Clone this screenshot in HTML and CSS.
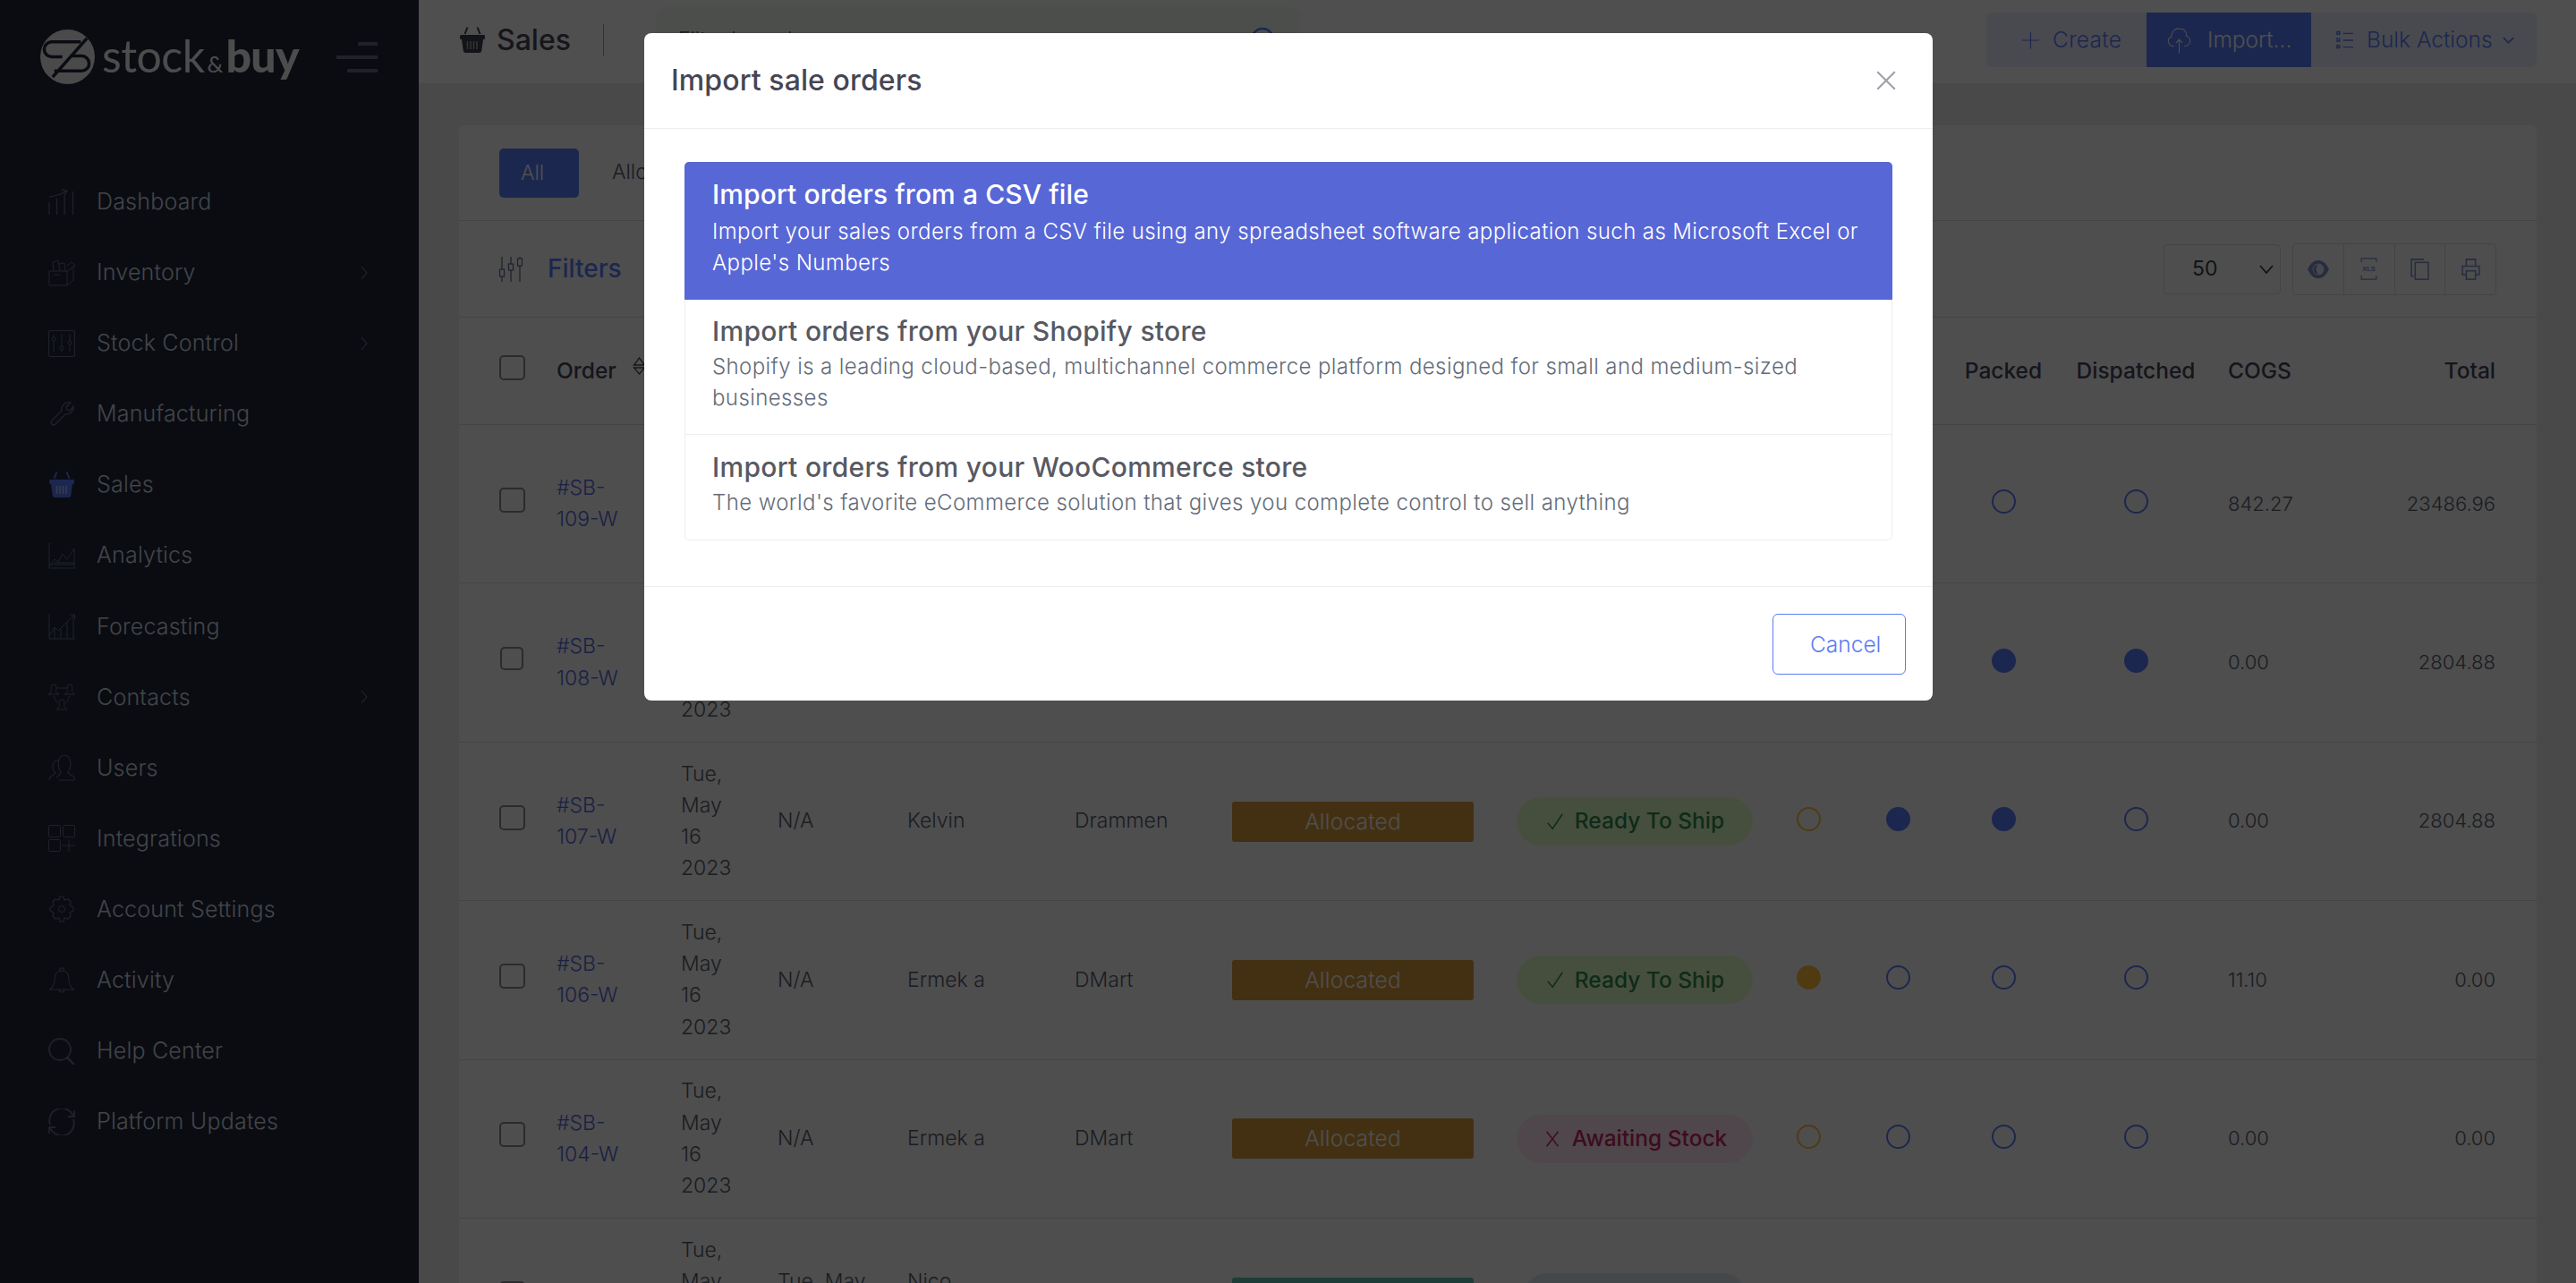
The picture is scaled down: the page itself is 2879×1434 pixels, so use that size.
FILE: index.html
```html
<!DOCTYPE html>
<html lang="en">
<head>
<meta charset="utf-8">
<title>Sales - stock&amp;buy</title>
<link rel="stylesheet" href="styles.css">
</head>
<body>
<svg class="defs" width="0" height="0" aria-hidden="true">
  <symbol id="basket" viewBox="0 0 30 30">
    <path d="M9.5 0.5 L6.5 8 M20.500 0.5 L23.500 8" fill="none" stroke="currentColor" stroke-width="2"/>
    <path d="M1 10.500 a1.500 1.500 0 0 1 1.500-1.500 h25 a1.500 1.500 0 0 1 1.500 1.500 v2 a1.500 1.500 0 0 1-1.500 1.500 h-0.500 l-1.800 13 a2.500 2.500 0 0 1-2.500 2 h-15.400 a2.500 2.500 0 0 1-2.500-2 l-1.800-13 h-0.500 a1.500 1.500 0 0 1-1.500-1.500 z" fill="currentColor"/>
    <path d="M9.500 16 v9 M13 16 v9 M16.500 16 v9 M20 16 v9" stroke="#fff" stroke-opacity=".55" stroke-width="1.500"/>
  </symbol>
  <symbol id="chev" viewBox="0 0 10 20">
    <path d="M2 3 L8 10 L2 17" fill="none" stroke="currentColor" stroke-width="1"/>
  </symbol>
  <symbol id="check" viewBox="0 0 24 24">
    <path d="M3 14 L9 21 L21 3" fill="none" stroke="currentColor" stroke-width="1.600"/>
  </symbol>
  <symbol id="cross" viewBox="0 0 24 24">
    <path d="M5 3 L19 21 M19 3 L5 21" fill="none" stroke="currentColor" stroke-width="1.600"/>
  </symbol>
</svg>

<aside class="sidebar">
  <div class="brand">
    <svg class="logo-mark" viewBox="0 0 62 64" aria-hidden="true">
      <circle cx="31" cy="32" r="31" fill="#fff" fill-opacity=".93"/>
      <path d="M46 15 H13 a8.500 8.500 0 0 0 0 17 H25 M53 11 L14 55 M16 48 H47 a8.500 8.500 0 0 0 0-17 H36" fill="none" stroke="#21283c" stroke-width="3.600"/>
    </svg>
    <span class="logo-text"><span class="logo-stock">stock</span><span class="logo-amp">&amp;</span><span class="logo-buy">buy</span></span>
    <div class="burger"><i class="b1"></i><i class="b2"></i><i class="b3"></i></div>
  </div>
  <nav class="nav">
    <a class="nav-item"><svg class="nav-ic" viewBox="0 0 30 30"><path d="M1 29 V15 M9.500 29 V11 M18 29 V7 M27.500 29 V3 M1 9 Q10 8 20 3 M15 1 L21 2.500 L18 7" fill="none" stroke="currentColor" stroke-width="1.300"/></svg><span>Dashboard</span></a>
    <a class="nav-item"><svg class="nav-ic" viewBox="0 0 30 30"><path d="M1 13 H21 V29 H1 Z M21 13 L29 7 M21 29 L28 23 V12 M6 13 L5 3 L11 1 L13 13 M12 5 L18 4 L19 13 M21 7 L26 3 L30 7 L26 12 M6 17 H13" fill="none" stroke="currentColor" stroke-width="1"/></svg><span>Inventory</span><svg class="nav-chev"><use href="#chev"/></svg></a>
    <a class="nav-item"><svg class="nav-ic" viewBox="0 0 30 30"><rect x="0.500" y="0.500" width="29" height="29" rx="2" fill="none" stroke="currentColor" stroke-width="1.200"/><path d="M6 5 V24 M15 5 V24 M24 5 V24" stroke="currentColor" stroke-width="1"/><circle cx="6" cy="10" r="2" fill="#21283c" stroke="currentColor"/><circle cx="15" cy="20" r="2" fill="#21283c" stroke="currentColor"/><circle cx="24" cy="14" r="2" fill="#21283c" stroke="currentColor"/></svg><span>Stock Control</span><svg class="nav-chev"><use href="#chev"/></svg></a>
    <a class="nav-item"><svg class="nav-ic" viewBox="0 0 30 30"><path d="M4 22 L15 11 A8 8 0 0 1 25 2 L20 7 L21 10 L24 11 L28 6 A8 8 0 0 1 19 15 L8 26 A2.800 2.800 0 0 1 4 22 Z" fill="none" stroke="currentColor" stroke-width="1.300"/></svg><span>Manufacturing</span></a>
    <a class="nav-item is-active"><svg class="nav-ic"><use href="#basket"/></svg><span>Sales</span></a>
    <a class="nav-item"><svg class="nav-ic" viewBox="0 0 30 30"><path d="M1 1 V29 H30 M1 27 L7 19 L11 22 L16 13 L21 19 L29 7 V29 M1 25 H29 M6 23 H29" fill="none" stroke="currentColor" stroke-width="1"/></svg><span>Analytics</span></a>
    <a class="nav-item"><svg class="nav-ic" viewBox="0 0 30 30"><path d="M1 1 V29 H30 M1 26 L7 16 L11 20 L29 2 M24 2 H29.500 V7 M7 16 V29 M14 18 V29 M21 10 V29 M28 4 V29" fill="none" stroke="currentColor" stroke-width="1"/></svg><span>Forecasting</span></a>
    <a class="nav-item"><svg class="nav-ic" viewBox="0 0 30 30"><path d="M6 1 a3 3 0 0 1 3 3 c0 4-1 5 0 6 l3 2 H0 l3-2 c1-1 0-2 0-6 a3 3 0 0 1 3-3 Z M24 1 a3 3 0 0 1 3 3 c0 4-1 5 0 6 l3 2 H18 l3-2 c1-1 0-2 0-6 a3 3 0 0 1 3-3 Z M15 18 a3 3 0 0 1 3 3 c0 3-1 4 0 5 l3 3 H9 l3-3 c1-1 0-2 0-5 a3 3 0 0 1 3-3 Z M9 5 H21 M6 14 L10 22 M24 14 L20 22" fill="none" stroke="currentColor" stroke-width="1"/></svg><span>Contacts</span><svg class="nav-chev"><use href="#chev"/></svg></a>
    <a class="nav-item"><svg class="nav-ic" viewBox="0 0 30 30"><path d="M1 29 c0-6 6-5 7-8 c-5-5-4-14 3-14 M12 29 H30 c0-6-7-5-8-9 c5-7 3-19-4-19 c-7 0-9 12-4 19 c-1 4-3 4-5 6" fill="none" stroke="currentColor" stroke-width="1.100"/></svg><span>Users</span></a>
    <a class="nav-item"><svg class="nav-ic" viewBox="0 0 30 30"><rect x="0.500" y="0.500" width="13" height="13" rx="1" fill="none" stroke="currentColor"/><rect x="16.500" y="0.500" width="13" height="13" rx="1" fill="none" stroke="currentColor"/><rect x="0.500" y="16.500" width="13" height="13" rx="1" fill="none" stroke="currentColor"/><path d="M23 16 V30 M16 23 H30" stroke="currentColor"/></svg><span>Integrations</span></a>
    <a class="nav-item"><svg class="nav-ic" viewBox="0 0 30 30"><circle cx="15" cy="15" r="3.500" fill="none" stroke="currentColor"/><path d="M13 1 h4 l1 4 l4-1 l3 3 l-1 4 l4 2 v4 l-4 2 l1 4 l-3 3 l-4-1 l-1 4 h-4 l-1-4 l-4 1 l-3-3 l1-4 l-4-2 v-4 l4-2 l-1-4 l3-3 l4 1 Z" fill="none" stroke="currentColor" stroke-width="1.200"/></svg><span>Account Settings</span></a>
    <a class="nav-item"><svg class="nav-ic" viewBox="0 0 30 30"><path d="M15 4 c-6 0-8 4-8 10 c0 6-2 9-6 11 H29 c-4-2-6-5-6-11 c0-6-2-10-8-10 Z M13 4 V1 H17 V4 M12 25 a3 3 0 0 0 6 0" fill="none" stroke="currentColor" stroke-width="1.100"/></svg><span>Activity</span></a>
    <a class="nav-item"><svg class="nav-ic" viewBox="0 0 30 30"><circle cx="13" cy="13" r="12" fill="none" stroke="currentColor" stroke-width="1.800"/><path d="M21 22 L29 30" stroke="currentColor" stroke-width="2.500"/></svg><span>Help Center</span></a>
    <a class="nav-item"><svg class="nav-ic" viewBox="0 0 30 30"><path d="M2 18 A13 13 0 0 1 28 9 M28 12 A13 13 0 0 1 2 21 M22 9 H29 V2 M8 21 H1 V28" fill="none" stroke="currentColor" stroke-width="1.800"/></svg><span>Platform Updates</span></a>
  </nav>
</aside>

<div class="page">
  <header class="topbar">
    <svg class="top-basket"><use href="#basket"/></svg>
    <h1 class="top-title">Sales</h1>
    <div class="top-rule"></div>
    <div class="search"><span>Filter by order</span>
      <svg class="search-ic" viewBox="0 0 30 30"><circle cx="14" cy="14" r="12" fill="none" stroke="currentColor" stroke-width="2.500"/><path d="M23 23 L29 29" stroke="currentColor" stroke-width="2.500"/></svg>
    </div>
    <div class="actions">
      <a class="act act-create"><svg class="act-ic" viewBox="0 0 20 20"><path d="M10 0 V20 M0 10 H20" stroke="currentColor" stroke-width="1.200"/></svg><span>Create</span></a>
      <a class="act act-import"><svg class="act-cloud" viewBox="0 0 28 30"><path d="M8 22 C1 22 -1 13 5 11 C5 4 11 0 15 2 C20 1 23 6 22 10 C28 11 29 21 20 22 M14 14 V30 M10.500 18 L14 14 L17.500 18" fill="none" stroke="currentColor" stroke-width="1.100"/></svg><span>Import...</span></a>
      <a class="act act-bulk"><svg class="act-ic" viewBox="0 0 20 24"><path d="M8 4 H20 M8 12 H20 M8 20 H20" stroke="currentColor" stroke-width="1.500"/><path d="M1 2 h3 v3 h-3 Z M1 10 h3 v3 h-3 Z M1 18 h3 v3 h-3 Z" fill="none" stroke="currentColor" stroke-width="1.500"/></svg><span>Bulk Actions</span><svg class="act-caret" viewBox="0 0 14 10"><path d="M1 2 L7 8 L13 2" fill="none" stroke="currentColor" stroke-width="2"/></svg></a>
    </div>
  </header>

  <main class="main">
    <section class="card">
      <div class="tabs"><a class="tab tab-on">All</a><a class="tab">Allocated</a></div>
      <div class="filters">
        <svg class="filter-ic" viewBox="0 0 26 28"><path d="M3 0 V14 M3 22 V28 M13 0 V8 M13 15 V28 M23 0 V2 M23 10 V28" stroke="currentColor" stroke-width="1.200"/><rect x="0.500" y="14" width="5" height="8" fill="none" stroke="currentColor" stroke-width="1.200"/><rect x="10.500" y="8" width="5" height="7" fill="none" stroke="currentColor" stroke-width="1.200"/><rect x="20.500" y="2" width="5" height="8" fill="none" stroke="currentColor" stroke-width="1.200"/></svg>
        <span class="filter-label">Filters</span>
        <div class="page-size"><span>50</span><svg class="size-caret" viewBox="0 0 16 12"><path d="M1 2 L8 10 L15 2" fill="none" stroke="currentColor" stroke-width="1.500"/></svg></div>
        <div class="tools">
          <div class="tool"><svg class="tool-eye" viewBox="0 0 28 24"><path d="M1 12 C5 3 10 1 14 1 C18 1 23 3 27 12 C23 21 18 23 14 23 C10 23 5 21 1 12 Z" fill="currentColor"/><circle cx="14" cy="12" r="7" fill="#fff" fill-opacity=".8"/><path d="M14 6 A6 6 0 1 0 14 18 A8 8 0 0 1 14 6 Z" fill="currentColor"/></svg></div>
          <div class="tool"><svg class="tool-xls" viewBox="0 0 22 30"><path d="M1 6 V1 H21 V6 M1 24 V29 H21 V24" fill="none" stroke="currentColor" stroke-width="1.500"/><text x="11" y="18" class="xls">XLS</text></svg></div>
          <div class="tool"><svg class="tool-doc" viewBox="0 0 24 28"><path d="M17 1 H1 V23 H4" fill="none" stroke="currentColor" stroke-width="1.800"/><rect x="6" y="5" width="17" height="22" fill="none" stroke="currentColor" stroke-width="1.800"/></svg></div>
          <div class="tool"><svg class="tool-doc" viewBox="0 0 24 28"><path d="M6 10 V1 H18 V10 M6 21 H1 V10 H23 V21 H18" fill="none" stroke="currentColor" stroke-width="1.800"/><rect x="6" y="16" width="12" height="11" fill="none" stroke="currentColor" stroke-width="1.800"/></svg></div>
        </div>
      </div>

      <div class="row row-head">
        <span class="box"></span>
        <span class="order-head">Order<svg class="sort" viewBox="0 0 14 20"><path d="M7 1 L13 9 H1 Z M1 12 H13 L7 19 Z" fill="none" stroke="currentColor" stroke-width="1.300"/></svg></span>
        <span class="col-packed c">Packed</span><span class="c">Dispatched</span>
        <span class="cogs">COGS</span><span class="r">Total</span>
      </div>

      <div class="row">
        <span class="box"></span><a class="link">#SB-<br>109-W</a>
        <span class="c col-packed"><i class="dot"></i></span><span class="c"><i class="dot"></i></span>
        <span class="cogs num">842.27</span><span class="r num">23486.96</span>
      </div>
      <div class="row">
        <span class="box box-sm"></span><a class="link">#SB-<br>108-W</a><span class="date">Tue, May 16 2023</span>
        <span class="c col-packed"><i class="dot on"></i></span><span class="c"><i class="dot on"></i></span>
        <span class="cogs num">0.00</span><span class="r num">2804.88</span>
      </div>
      <div class="row">
        <span class="box"></span><a class="link">#SB-<br>107-W</a><span class="date">Tue, May 16 2023</span><span>N/A</span><span>Kelvin</span><span>Drammen</span>
        <span class="tag tag-amber">Allocated</span><span class="pill pill-green"><svg class="pill-ic"><use href="#check"/></svg>Ready To Ship</span>
        <span class="c"><i class="dot amber"></i></span><span class="c"><i class="dot on"></i></span><span class="c"><i class="dot on"></i></span><span class="c"><i class="dot"></i></span>
        <span class="cogs num">0.00</span><span class="r num">2804.88</span>
      </div>
      <div class="row">
        <span class="box"></span><a class="link">#SB-<br>106-W</a><span class="date">Tue, May 16 2023</span><span>N/A</span><span>Ermek a</span><span>DMart</span>
        <span class="tag tag-amber">Allocated</span><span class="pill pill-green"><svg class="pill-ic"><use href="#check"/></svg>Ready To Ship</span>
        <span class="c"><i class="dot amber on"></i></span><span class="c"><i class="dot"></i></span><span class="c"><i class="dot"></i></span><span class="c"><i class="dot"></i></span>
        <span class="cogs num">11.10</span><span class="r num">0.00</span>
      </div>
      <div class="row">
        <span class="box"></span><a class="link">#SB-<br>104-W</a><span class="date">Tue, May 16 2023</span><span>N/A</span><span>Ermek a</span><span>DMart</span>
        <span class="tag tag-amber">Allocated</span><span class="pill pill-red"><svg class="pill-ic"><use href="#cross"/></svg>Awaiting Stock</span>
        <span class="c"><i class="dot amber"></i></span><span class="c"><i class="dot"></i></span><span class="c"><i class="dot"></i></span><span class="c"><i class="dot"></i></span>
        <span class="cogs num">0.00</span><span class="r num">0.00</span>
      </div>
      <div class="row">
        <span class="box"></span><a class="link"></a><span class="date">Tue, May 16 2023</span><span>Tue, May<br>16 2023</span><span>Nico<br>&nbsp;</span><span></span>
        <span class="tag tag-teal"></span><span class="pill pill-grey"></span>
      </div>
    </section>
  </main>
</div>

<div class="backdrop"></div>

<div class="modal" role="dialog" aria-label="Import sale orders">
  <div class="modal-head">
    <h2 class="modal-title">Import sale orders</h2>
    <svg class="modal-close" viewBox="0 0 22 22"><path d="M2 2 L20 20 M20 2 L2 20" fill="none" stroke="currentColor" stroke-width="2"/></svg>
  </div>
  <div class="modal-body">
    <div class="list">
      <a class="list-item list-active">
        <h3 class="li-title">Import orders from a CSV file</h3>
        <p class="li-text">Import your sales orders from a CSV file using any spreadsheet software application such as Microsoft Excel or Apple's Numbers</p>
      </a>
      <a class="list-item">
        <h3 class="li-title">Import orders from your Shopify store</h3>
        <p class="li-text">Shopify is a leading cloud-based, multichannel commerce platform designed for small and medium-sized businesses</p>
      </a>
      <a class="list-item">
        <h3 class="li-title">Import orders from your WooCommerce store</h3>
        <p class="li-text">The world's favorite eCommerce solution that gives you complete control to sell anything</p>
      </a>
    </div>
  </div>
  <div class="modal-foot"><a class="btn-cancel">Cancel</a></div>
</div>
</body>
</html>
```

FILE: styles.css
```css
* { box-sizing: border-box; }
html, body { margin: 0; height: 1434px; overflow: hidden; }
body {
  display: flex;
  position: relative;
  width: 2879px;
  font-family: Inter, "Open Sans", "Liberation Sans", sans-serif;
  font-size: 23px;
  font-weight: 300;
  line-height: 35.2px;
  color: #595d6e;
  background: #ebebeb;
}
.defs { position: absolute; }
a { color: inherit; text-decoration: none; }
h1, h2, h3, p { margin: 0; }

/* sidebar */
.sidebar { width: 468px; flex: none; height: 1434px; background: #20273a; color: #d5dce6; }
.brand { height: 186px; padding: 32px 46px 0 45px; display: flex; align-items: flex-start; }
.logo-mark { width: 61px; height: 63px; flex: none; }
.logo-text { margin-left: 8px; font-family: Lato, sans-serif; color: #fff; font-size: 50px; line-height: 60px; white-space: nowrap; opacity: .95; }
.logo-stock { font-weight: 400; letter-spacing: -.5px; }
.logo-amp { font-weight: 400; font-size: 25px; margin: 0 3px; }
.logo-buy { font-weight: 900; font-size: 50px; letter-spacing: -.6px; }
.burger { margin-left: auto; margin-top: 15px; width: 46px; flex: none; display: flex; flex-direction: column; align-items: flex-end; gap: 11.5px; }
.burger i { display: block; height: 3.500px; background: #676e85; }
.b1 { width: 22px; } .b2 { width: 46px; } .b3 { width: 34px; }

.nav-item { height: 79.100px; padding: 0 56px 0 54px; display: flex; align-items: center; font-size: 25px; letter-spacing: .2px; }
.nav-ic { width: 30px; height: 30px; flex: none; margin-right: 24px; color: #676e85; }
.nav-chev { width: 10px; height: 22px; margin-left: auto; color: #8a90a4; }
.nav-item.is-active .nav-ic { color: #5a7eff; }

/* top bar */
.page { flex: 1; min-width: 0; height: 1434px; overflow: hidden; display: flex; flex-direction: column; }
.topbar { height: 93px; flex: none; background: #fff; padding: 0 44px 4px 45px; display: flex; align-items: center; }
.top-basket { width: 30px; height: 30px; color: #3f4250; flex: none; }
.top-title { font-size: 32px; font-weight: 500; margin-left: 12px; color: #48465b; line-height: 40px; }
.top-rule { width: 1px; height: 36px; background: #a3a6b2; margin-left: 36px; }
.search { width: 720px; height: 74px; margin-left: 58px; background: #f5fbf5; border-radius: 10px; display: flex; align-items: center; justify-content: space-between; padding: 0 26px 0 25px; }
.search-ic { width: 30px; height: 30px; color: #5a7eff; }
.actions { margin-left: auto; height: 61px; display: flex; background: #ebefff; border-radius: 6px; color: #5a7eff; font-size: 24.500px; }
.act { display: flex; align-items: center; height: 61px; }
.act-create { width: 179px; padding-left: 40px; gap: 15px; letter-spacing: .3px; }
.act-import { width: 184px; padding-left: 23px; gap: 18px; background: #5a7eff; color: #fff; }
.act-bulk { width: 252px; padding-left: 28px; gap: 15px; }
.act-ic { width: 19px; height: 24px; flex: none; }
.act-cloud { width: 27px; height: 30px; flex: none; }
.act-caret { width: 13px; height: 10px; margin-left: -4px; }

/* card */
.main { flex: 1; padding: 47px 44px 0 45px; }
.card { background: #fbfbfb; border-radius: 6px 6px 0 0; }
.tabs { height: 107px; padding-left: 45px; display: flex; align-items: center; gap: 37px; border-bottom: 1px solid #d9dbe4; }
.tab-on { width: 89px; height: 55px; padding-left: 24px; line-height: 54px; border-radius: 5px; background: #5a7eff; color: #fff; }
.filters { height: 108px; padding: 0 45px; display: flex; align-items: center; border-bottom: 1px solid #d9dbe4; }
.filter-ic { width: 26px; height: 28px; color: #5d678f; margin-right: 28px; }
.filter-label { font-size: 28px; font-weight: 500; color: #5a7eff; }
.page-size { margin-left: auto; width: 131px; height: 56px; border: 1px solid #dadbe2; border-radius: 4px; display: flex; align-items: center; justify-content: space-between; padding: 0 7px 0 31px; color: #3c3f4c; font-weight: 400; }
.size-caret { width: 16px; height: 12px; color: #2c2e3a; }
.tools { margin-left: 13px; width: 228px; height: 58px; display: flex; border: 1px solid #dadbe2; border-radius: 4px; }
.tool { flex: 1; display: flex; align-items: center; justify-content: center; border-left: 1px solid #dadbe2; color: #7f8fcf; }
.tool:first-child { border-left: 0; }
.tool-eye { width: 26px; height: 22px; }
.tool-xls { width: 19px; height: 25px; }
.tool-doc { width: 23px; height: 24px; }
.xls { font-family: "Liberation Sans", sans-serif; font-size: 9px; font-weight: 700; text-anchor: middle; fill: currentColor; }

/* table */
.row {
  display: grid;
  grid-template-columns: 64px 139px 108px 145px 187px 176px 318px 286px 80px 120px 116px 180px 100px 212px;
  align-items: center;
  padding: 17.800px 46px 17.800px 45px;
  border-bottom: 1px solid #d9dbe4;
  min-height: 177.400px;
}
.row-head { min-height: 0; height: 120px; padding-top: 0; padding-bottom: 0; font-size: 24.500px; font-weight: 500; color: #48465b; }
.box { width: 29px; height: 28px; margin-top: -9px; border: 2px solid #8a8c96; border-radius: 5px; }
.box-sm { width: 26px; height: 26px; margin-left: 1px; }
.row-head .box { margin-top: -8px; }
.order-head { display: flex; align-items: flex-start; gap: 18px; }
.sort { width: 15px; height: 20px; margin-top: 2px; flex: none; }
.link { color: #5867dd; }
.date { width: min-content; }
.c { display: flex; justify-content: center; white-space: nowrap; }
.col-packed { grid-column: 11; }
.r { text-align: right; }
.cogs { padding-left: 13px; }
.num { font-size: 22px; }
.dot { display: block; width: 27px; height: 27px; margin-top: -5px; border-radius: 50%; border: 2px solid #5a7eff; }
.dot.on { background: #5a7eff; }
.dot.amber { border-color: #ffbc3a; }
.dot.amber.on { background: #ffbc3a; }
.tag { width: 270px; height: 45px; line-height: 45px; border-radius: 3px; text-align: center; color: #fff; font-size: 24.500px; letter-spacing: .2px; }
.tag-amber { background: #d99b3a; }
.tag-teal { background: #5ec5b5; }
.pill { width: 264px; height: 54px; border-radius: 27px; display: flex; align-items: center; justify-content: center; gap: 11px; font-size: 24.500px; font-weight: 500; white-space: nowrap; }
.pill-ic { width: 22px; height: 24px; flex: none; }
.pill-green { background: #e2ffc4; color: #2f8a50; }
.pill-red { background: #ffe6f0; color: #c8255f; }
.pill-grey { background: #dfe8f2; color: #5a6472; margin-left: 7px; width: 250px; }

/* overlay */
.backdrop { position: absolute; inset: 0; background: rgba(0, 0, 0, .69); }
.modal { position: absolute; left: 720px; top: 37px; width: 1440px; height: 746px; background: #fff; border-radius: 8px; display: flex; flex-direction: column; color: #646c79; }
.modal-head { height: 107px; flex: none; padding: 0 40px 0 30px; display: flex; align-items: center; justify-content: space-between; border-bottom: 1px solid #ebedf2; }
.modal-title { font-size: 32px; font-weight: 500; letter-spacing: .1px; line-height: 40px; color: #454654; }
.modal-close { width: 24px; height: 24px; color: #a0a2ad; }
.modal-body { flex: 1; padding: 37px 45px 0; }
.list { border: 1px solid #ebedf2; border-top: 0; border-radius: 5px; }
.list-item { display: block; padding: 15px 30px 23px; border-top: 1px solid #ebedf2; }
.list-active { margin: 0 -1px; padding: 15px 31px 24px; background: #5867d6; color: #fff; border-top: 0; border-radius: 5px 5px 0 0; }
.list-active .li-text { margin-top: 4px; }
.list-active + .list-item { border-top: 0; padding-top: 14px; }
.li-title { font-size: 30px; font-weight: 500; letter-spacing: .3px; line-height: 42px; color: #575962; }
.list-active .li-title { color: #fff; letter-spacing: .1px; }
.li-text { margin-top: 2px; font-size: 24px; letter-spacing: .4px; line-height: 34.600px; }
.modal-foot { height: 128px; flex: none; padding: 30px 30px 0 0; border-top: 1px solid #ebedf2; display: flex; justify-content: flex-end; }
.btn-cancel { width: 149px; height: 68px; padding-left: 41px; line-height: 66px; border: 1.500px solid #5b7cf3; border-radius: 6px; color: #5b7cf3; font-size: 24.500px; }
```
